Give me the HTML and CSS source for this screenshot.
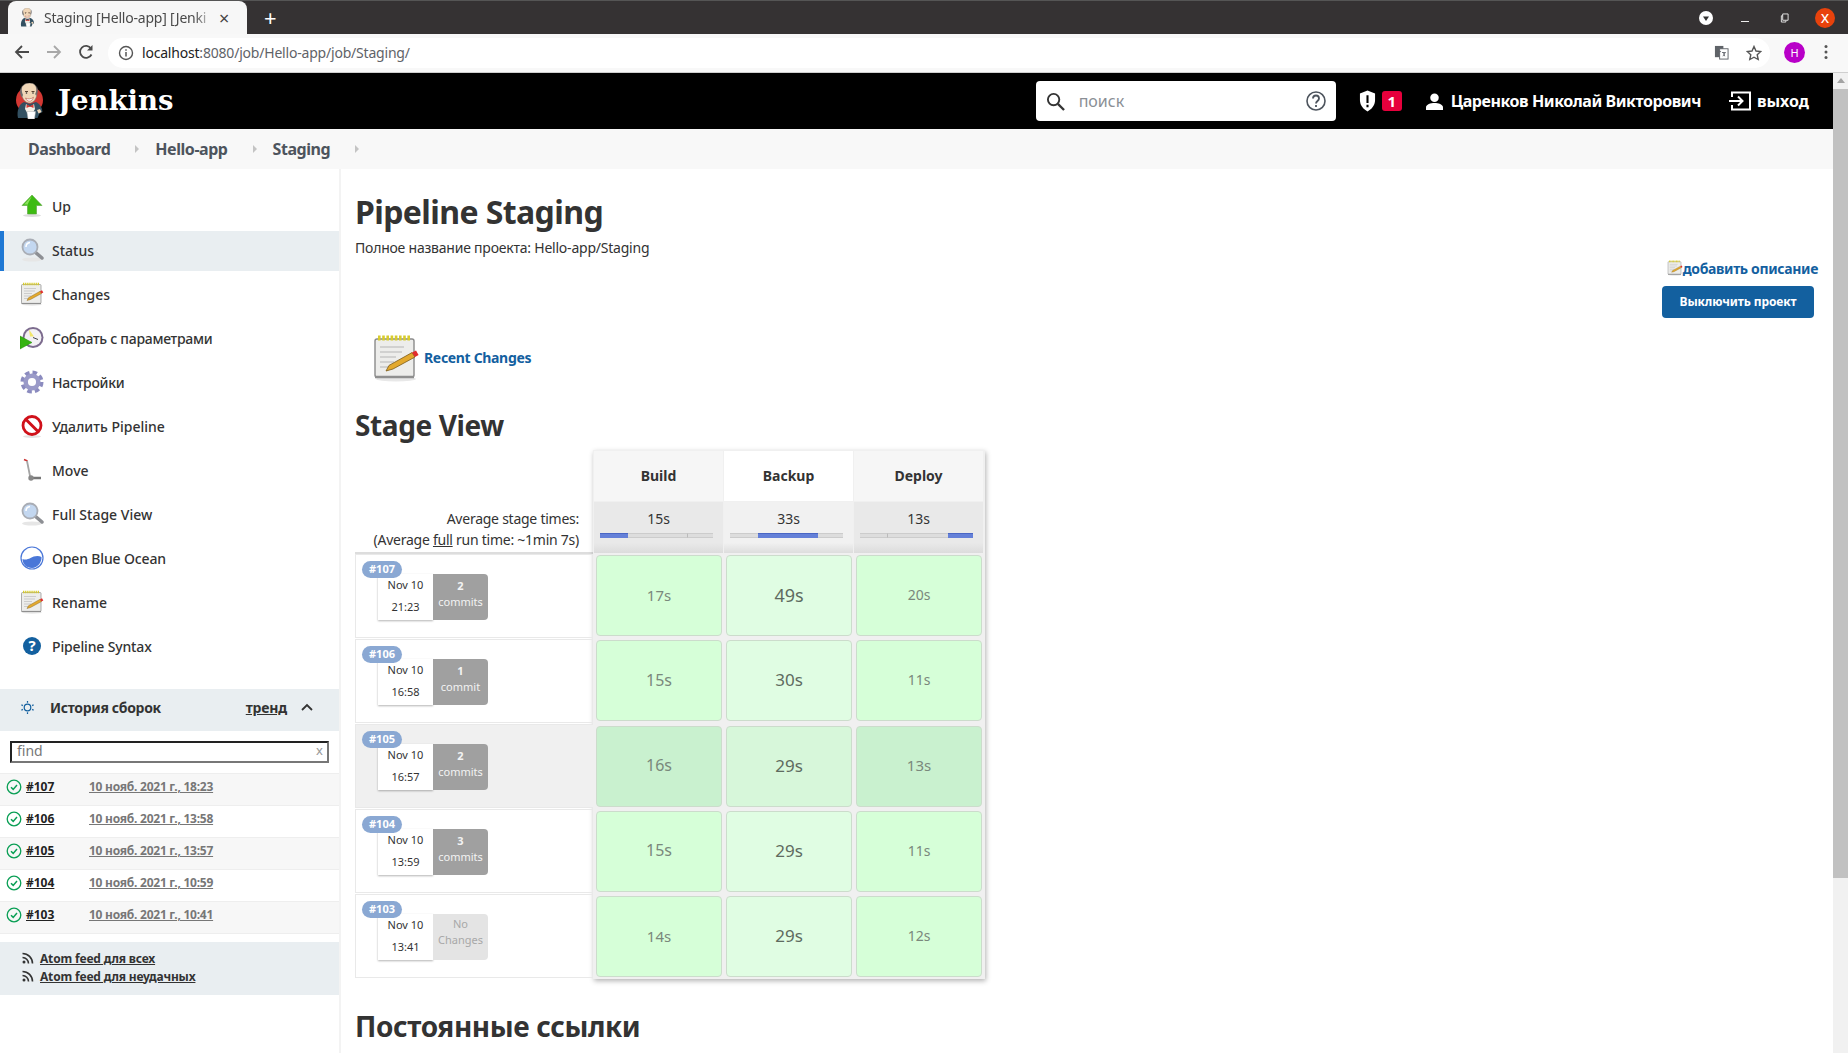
FILE: index.html
```html
<!DOCTYPE html>
<html lang="ru">
<head>
<meta charset="utf-8">
<title>Staging [Hello-app] [Jenkins]</title>
<link rel="stylesheet" href="styles.css">
</head>
<body>
<svg class="defs" aria-hidden="true">
  <symbol id="i-butler-body" viewBox="0 0 28 36">
    <path d="M2 35c-1.500-7 1-14 6-16l6 2 6-2c4 2 6 5 6.500 10l-3 1.500-2 4.500z" fill="#335061"/>
    <path d="M10 21l4 3 4-3 1 5-5 9-5-9z" fill="#f3efe6"/>
    <path d="M5 8c0-5 3.500-8 8.500-8S21 3 21 9c0 5-2 10-6.500 11C9 21 5 14 5 8z" fill="#f0d6b7" stroke="#6d6b6d" stroke-width=".5"/>
    <path d="M5 13c-1.500-4-1-7 .5-9 0 3 .5 6 1.500 8l-1 2zM21 11c1.200-2.500 1-6-.5-8 .2 3-.2 6-1.300 8l1 2z" fill="#6d6b6d"/>
    <path d="M9 8.500h3M15.500 8.500h3" stroke="#49311f" stroke-width=".9"/>
    <circle cx="10.500" cy="10" r=".8" fill="#2b2b2b"/>
    <circle cx="17" cy="10" r=".8" fill="#2b2b2b"/>
    <path d="M9.500 15c2.500 1.500 5.500 1.200 8-.8-1 3-2.500 4-4 4s-3-1-4-3.200z" fill="#fff" stroke="#a5392f" stroke-width=".5"/>
    <path d="M10.500 21.500l3.500 1.500 3.500-1.500v3.500l-3.500-1.500-3.500 1.500z" fill="#d33833"/>
    <path d="M11 28.500h8.500l-1 7.500h-6.500z" fill="#fff" stroke="#b5b5b5" stroke-width=".5"/>
    <path d="M21 27l3-1 1.500 3-3 1.500z" fill="#f0d6b7"/>
  </symbol>
  <symbol id="i-butler" viewBox="0 0 28 36">
    <circle cx="13.500" cy="17" r="13.500" fill="#d33833"/>
    <use href="#i-butler-body" width="28" height="36"/>
  </symbol>
  <symbol id="i-up" viewBox="0 0 24 24">
    <ellipse cx="12" cy="21.500" rx="9" ry="1.500" fill="#ddd"/>
    <path d="M12 1l10 10.500h-5.500V20h-9v-8.500H2z" fill="#3dbb12" stroke="#5aa33c" stroke-width=".6"/>
    <path d="M12 2l-8 8.500h4v-1z" fill="#8adf5c"/>
  </symbol>
  <symbol id="i-search" viewBox="0 0 24 24">
    <ellipse cx="12" cy="21.500" rx="10" ry="2" fill="#e6e6e6"/>
    <path d="M15 14l7 6" stroke="#8d8f94" stroke-width="3.500" stroke-linecap="round"/>
    <circle cx="10" cy="9" r="7.500" fill="#c3d7f0" stroke="#a9adb5" stroke-width="1.800"/>
    <path d="M6 9a4.500 4.500 0 0 1 4-4.500" stroke="#fff" stroke-width="1.500" fill="none"/>
  </symbol>
  <symbol id="i-notepad" viewBox="0 0 24 24">
    <ellipse cx="12" cy="22.500" rx="10" ry="1.200" fill="#e8e8e8"/>
    <rect x="1.500" y="2.500" width="19.500" height="19" rx="1" fill="#ededeb" stroke="#8b8b8b" stroke-width=".7"/>
    <path d="M3 2h16" stroke="#d8cc2c" stroke-width="2.600" stroke-dasharray="1.300 .8"/>
    <path d="M4 6.500h12M4 9h11M4 11.500h8M4 14h7M4 16.500h6" stroke="#b5b5b5" stroke-width=".6"/>
    <path d="M7 18.500l1.500-2.800L20 9.300l1.500 2.200-11 6z" fill="#e3a92e" stroke="#7c5a16" stroke-width=".4"/>
    <path d="M20 9.300l1.500 2.200 1.800-1-1.300-2.300z" fill="#e12d2d"/>
    <path d="M1.500 21.500h19.500" stroke="#8f8f8f" stroke-width="1.200"/>
  </symbol>
  <symbol id="i-clock" viewBox="0 0 24 24">
    <circle cx="13" cy="11.500" r="10.500" fill="#7c6b8e"/>
    <circle cx="13" cy="11.500" r="8.500" fill="#f3f1f4"/>
    <path d="M9 3.500l5 7h-4z" fill="#f2e66b"/>
    <path d="M13 11.500l5 2" stroke="#444" stroke-width="1"/>
    <path d="M0 10v13l12-6.500z" fill="#35b311" stroke="#288a0c" stroke-width=".5"/>
  </symbol>
  <symbol id="i-gear" viewBox="0 0 24 24">
    <circle cx="12" cy="12" r="9.500" fill="none" stroke="#8b8bbf" stroke-width="4" stroke-dasharray="4.500 3"/>
    <circle cx="12" cy="12" r="6.300" fill="none" stroke="#9a9ac8" stroke-width="4.500"/>
  </symbol>
  <symbol id="i-stop" viewBox="0 0 24 24">
    <ellipse cx="12" cy="22.500" rx="9" ry="1.500" fill="#e3e3e3"/>
    <circle cx="12" cy="11.500" r="9" fill="#fff" stroke="#d0111a" stroke-width="2.800"/>
    <path d="M5.500 5l13 13" stroke="#d0111a" stroke-width="3"/>
  </symbol>
  <symbol id="i-move" viewBox="0 0 24 24">
    <path d="M4 1.500l3.500 1.500" stroke="#c33" stroke-width="1.500"/>
    <path d="M7 3l3 15" stroke="#a5a5a5" stroke-width="1.800"/>
    <path d="M10 20h11" stroke="#777" stroke-width="2.500"/>
    <circle cx="11" cy="20" r="2.700" fill="#888"/>
  </symbol>
  <symbol id="i-ocean" viewBox="0 0 24 24">
    <circle cx="12" cy="12" r="11" fill="#fff" stroke="#4a77d8" stroke-width="1.200"/>
    <path d="M2.500 13c3 1 5 .5 8-1 3-1.500 7-3 11-1 .5 5-4 11-9.500 11S2.500 18 2.500 13z" fill="#4a77d8"/>
  </symbol>
  <symbol id="i-rss" viewBox="0 0 12 12">
    <circle cx="2" cy="10" r="1.500" fill="#333"/>
    <path d="M.5 5.500a6 6 0 0 1 6 6M.5 1.500a10 10 0 0 1 10 10" fill="none" stroke="#333" stroke-width="1.600"/>
  </symbol>
  <symbol id="i-ok" viewBox="0 0 16 16">
    <circle cx="8" cy="8" r="6.800" fill="none" stroke="#0a9f55" stroke-width="1.300"/>
    <path d="M5 8.200l2.200 2.200L11 6" fill="none" stroke="#0a9f55" stroke-width="1.500"/>
  </symbol>
</svg>

<div class="window">
  <div class="tabstrip">
    <div class="tab">
      <svg class="tab-fav"><use href="#i-butler-body"/></svg>
      <span class="tab-title">Staging [Hello-app] [Jenki</span>
      <span class="tab-close">×</span>
    </div>
    <span class="tab-new">+</span>
    <div class="win-controls">
      <span class="win-menu"><svg viewBox="0 0 14 14"><circle cx="7" cy="7" r="7" fill="#fff"/><path d="M4 5.500h6L7 10z" fill="#333"/></svg></span>
      <span class="win-min"></span>
      <span class="win-max"><svg viewBox="0 0 10 10"><path d="M3 2.500h-1.500v7h5v-1.500M3 .5h6v7H3z" fill="none" stroke="#eee" stroke-width="1"/></svg></span>
      <span class="win-close">x</span>
    </div>
  </div>
  <div class="toolbar">
    <svg class="nav-ico" viewBox="0 0 16 16"><path d="M15 8H2M8 2L2 8l6 6" fill="none" stroke="#4a4a4a" stroke-width="1.800"/></svg>
    <svg class="nav-ico nav-off" viewBox="0 0 16 16"><path d="M1 8h13M8 2l6 6-6 6" fill="none" stroke="#a8a8a8" stroke-width="1.800"/></svg>
    <svg class="nav-ico" viewBox="0 0 16 16"><path d="M13.500 10.500A6 6 0 1 1 13 4.500" fill="none" stroke="#4a4a4a" stroke-width="1.800"/><path d="M14.500 1v5.500H9z" fill="#4a4a4a"/></svg>
    <div class="omnibox">
      <svg class="omni-info" viewBox="0 0 16 16"><circle cx="8" cy="8" r="6.500" fill="none" stroke="#555" stroke-width="1.400"/><path d="M8 7v4.500M8 4.300v1.500" stroke="#555" stroke-width="1.500"/></svg>
      <span class="omni-host">localhost</span><span class="omni-path">:8080/job/Hello-app/job/Staging/</span>
      <svg class="omni-tr" viewBox="0 0 16 16"><rect x="1" y="1" width="9" height="12" fill="#5f6368"/><rect x="6" y="4" width="9" height="11" fill="#fff" stroke="#5f6368"/><path d="M3.500 7h4M8.500 8h4M10 8l1.500 4M12 8l-2.500 4" stroke="#5f6368" stroke-width=".9"/></svg>
      <svg class="omni-star" viewBox="0 0 16 16"><path d="M8 1.500l2 4.500 4.800.5-3.600 3.200 1 4.800L8 12.200l-4.200 2.300 1-4.800-3.600-3.200L6 6z" fill="none" stroke="#555" stroke-width="1.400"/></svg>
    </div>
    <span class="avatar">H</span>
    <svg class="menu-dots" viewBox="0 0 4 16"><circle cx="2" cy="2.500" r="1.500" fill="#555"/><circle cx="2" cy="8" r="1.500" fill="#555"/><circle cx="2" cy="13.500" r="1.500" fill="#555"/></svg>
  </div>

  <div class="viewport">
    <div class="page">
      <header class="jk-header">
        <svg class="jk-logo"><use href="#i-butler"/></svg>
        <span class="jk-name">Jenkins</span>
        <div class="jk-search">
          <svg class="jk-search-ico" viewBox="0 0 20 20"><circle cx="8" cy="8" r="6" fill="none" stroke="#333" stroke-width="2"/><path d="M12.500 12.500L19 19" stroke="#333" stroke-width="2.400"/></svg>
          <span class="jk-search-text">поиск</span>
          <svg class="jk-help" viewBox="0 0 20 20"><circle cx="10" cy="10" r="9" fill="none" stroke="#4d545d" stroke-width="1.600"/><path d="M7 7.500c0-4 6-4 6 0 0 2.500-3 2.500-3 5M10 14v2" fill="none" stroke="#4d545d" stroke-width="1.800"/></svg>
        </div>
        <svg class="jk-shield" viewBox="0 0 18 22"><path d="M9 0l8 3v7c0 6-4 10-8 12-4-2-8-6-8-12V3z" fill="#fff"/><path d="M9 5v8M9 15v2.500" stroke="#000" stroke-width="2.200"/></svg>
        <span class="jk-badge">1</span>
        <svg class="jk-user" viewBox="0 0 18 18"><circle cx="9" cy="5" r="4.500" fill="#fff"/><path d="M0 18v-3c0-3 5-4.500 9-4.500s9 1.500 9 4.500v3z" fill="#fff"/></svg>
        <span class="jk-username">Царенков Николай Викторович</span>
        <svg class="jk-exit" viewBox="0 0 22 20"><path d="M3 6V1.500h18v17H3V14" fill="none" stroke="#fff" stroke-width="2"/><path d="M0 10h13M9 5.500l4.500 4.500L9 14.500" fill="none" stroke="#fff" stroke-width="2"/></svg>
        <span class="jk-logout">выход</span>
      </header>

      <nav class="crumbs">
        <span class="crumb">Dashboard</span><span class="crumb-arrow"></span>
        <span class="crumb">Hello-app</span><span class="crumb-arrow"></span>
        <span class="crumb">Staging</span><span class="crumb-arrow"></span>
      </nav>

      <div class="columns">
        <aside class="side">
          <ul class="tasks">
            <li class="task"><svg class="task-ico"><use href="#i-up"/></svg>Up</li>
            <li class="task task-on"><svg class="task-ico"><use href="#i-search"/></svg>Status</li>
            <li class="task"><svg class="task-ico"><use href="#i-notepad"/></svg>Changes</li>
            <li class="task task-cy"><svg class="task-ico"><use href="#i-clock"/></svg>Собрать с параметрами</li>
            <li class="task task-cy"><svg class="task-ico"><use href="#i-gear"/></svg>Настройки</li>
            <li class="task"><svg class="task-ico"><use href="#i-stop"/></svg>Удалить Pipeline</li>
            <li class="task"><svg class="task-ico"><use href="#i-move"/></svg>Move</li>
            <li class="task"><svg class="task-ico"><use href="#i-search"/></svg>Full Stage View</li>
            <li class="task task-la"><svg class="task-ico"><use href="#i-ocean"/></svg>Open Blue Ocean</li>
            <li class="task"><svg class="task-ico"><use href="#i-notepad"/></svg>Rename</li>
            <li class="task task-la"><svg class="task-ico" viewBox="0 0 24 24"><circle cx="12" cy="12" r="9" fill="#13609f"/><text x="12" y="17" text-anchor="middle" class="help-q">?</text></svg>Pipeline Syntax</li>
          </ul>

          <div class="hist-head">
            <svg class="hist-ico" viewBox="0 0 16 16"><circle cx="8" cy="8" r="3.500" fill="none" stroke="#13609f" stroke-width="1.300"/><path d="M8 1v2M8 13v2M1.500 5l1.500 1M13 10l1.500 1M1.500 11L3 10M13 6l1.500-1" stroke="#13609f" stroke-width="1.300"/></svg>
            <span class="hist-title">История сборок</span>
            <span class="hist-trend">тренд</span>
            <svg class="hist-chev" viewBox="0 0 12 8"><path d="M1 7l5-5 5 5" fill="none" stroke="#333" stroke-width="1.800"/></svg>
          </div>
          <div class="hist-find"><div class="hist-input"><span>find</span><span class="hist-x">x</span></div></div>
          <ul class="hist-list">
            <li class="hist-row"><svg class="hist-ok"><use href="#i-ok"/></svg><span class="hist-no">#107</span><span class="hist-date">10 нояб. 2021 г., 18:23</span></li>
            <li class="hist-row"><svg class="hist-ok"><use href="#i-ok"/></svg><span class="hist-no">#106</span><span class="hist-date">10 нояб. 2021 г., 13:58</span></li>
            <li class="hist-row"><svg class="hist-ok"><use href="#i-ok"/></svg><span class="hist-no">#105</span><span class="hist-date">10 нояб. 2021 г., 13:57</span></li>
            <li class="hist-row"><svg class="hist-ok"><use href="#i-ok"/></svg><span class="hist-no">#104</span><span class="hist-date">10 нояб. 2021 г., 10:59</span></li>
            <li class="hist-row"><svg class="hist-ok"><use href="#i-ok"/></svg><span class="hist-no">#103</span><span class="hist-date">10 нояб. 2021 г., 10:41</span></li>
          </ul>
          <div class="feeds">
            <div class="feed"><svg class="feed-ico"><use href="#i-rss"/></svg><span class="feed-link">Atom feed для всех</span></div>
            <div class="feed"><svg class="feed-ico"><use href="#i-rss"/></svg><span class="feed-link">Atom feed для неудачных</span></div>
          </div>
        </aside>

        <main class="main">
          <h1 class="title">Pipeline Staging</h1>
          <p class="fullname">Полное название проекта: Hello-app/Staging</p>
          <div class="actions">
            <span class="add-desc"><svg class="add-ico"><use href="#i-notepad"/></svg>добавить описание</span>
            <button class="disable-btn">Выключить проект</button>
          </div>
          <div class="recent"><svg class="recent-ico"><use href="#i-notepad"/></svg><span class="recent-link">Recent Changes</span></div>
          <h2 class="section">Stage View</h2>

          <div class="stage">
            <div class="stage-left">
              <div class="avg-label">
                <div>Average stage times:</div>
                <div>(Average <u>full</u> run time: ~1min 7s)</div>
              </div>
              <div class="run">
                <span class="run-badge">#107</span>
                <div class="run-date"><span>Nov 10</span><span>21:23</span></div>
                <div class="run-commits"><b>2</b><span>commits</span></div>
              </div>
              <div class="run">
                <span class="run-badge">#106</span>
                <div class="run-date"><span>Nov 10</span><span>16:58</span></div>
                <div class="run-commits"><b>1</b><span>commit</span></div>
              </div>
              <div class="run run-hover">
                <span class="run-badge">#105</span>
                <div class="run-date"><span>Nov 10</span><span>16:57</span></div>
                <div class="run-commits"><b>2</b><span>commits</span></div>
              </div>
              <div class="run">
                <span class="run-badge">#104</span>
                <div class="run-date"><span>Nov 10</span><span>13:59</span></div>
                <div class="run-commits"><b>3</b><span>commits</span></div>
              </div>
              <div class="run">
                <span class="run-badge">#103</span>
                <div class="run-date"><span>Nov 10</span><span>13:41</span></div>
                <div class="run-commits run-none"><span>No</span><span>Changes</span></div>
              </div>
            </div>
            <div class="stage-right">
              <div class="st-heads">
                <div class="st-head">Build</div>
                <div class="st-head st-alt">Backup</div>
                <div class="st-head">Deploy</div>
              </div>
              <div class="st-avgs">
                <div class="st-avg"><span>15s</span><div class="bar"><i class="seg seg-on"></i><i class="seg seg-tick"></i><i class="seg"></i></div></div>
                <div class="st-avg st-alt2"><span>33s</span><div class="bar"><i class="seg"></i><i class="seg seg-on"></i><i class="seg"></i></div></div>
                <div class="st-avg"><span>13s</span><div class="bar"><i class="seg seg-tick"></i><i class="seg"></i><i class="seg seg-on"></i></div></div>
              </div>
              <div class="st-row"><div class="st-cell f15">17s</div><div class="st-cell st-cell-alt f18">49s</div><div class="st-cell f14">20s</div></div>
              <div class="st-row"><div class="st-cell f16">15s</div><div class="st-cell st-cell-alt f17">30s</div><div class="st-cell f14">11s</div></div>
              <div class="st-row st-row-hover"><div class="st-cell f16">16s</div><div class="st-cell st-cell-alt f17">29s</div><div class="st-cell f15">13s</div></div>
              <div class="st-row"><div class="st-cell f16">15s</div><div class="st-cell st-cell-alt f17">29s</div><div class="st-cell f14">11s</div></div>
              <div class="st-row"><div class="st-cell f15">14s</div><div class="st-cell st-cell-alt f17">29s</div><div class="st-cell f14">12s</div></div>
            </div>
          </div>
          <h2 class="section section-links">Постоянные ссылки</h2>
        </main>
      </div>
    </div>
    <div class="scrollbar"><span class="scroll-up"></span><div class="scroll-thumb"></div></div>
  </div>
</div>
</body>
</html>
```
FILE: styles.css
```css
* { box-sizing: border-box; }
html, body { margin: 0; padding: 0; height: 100%; overflow: hidden; }
body { font-family: "Noto Sans", "Open Sans", sans-serif; color: #333; background: #fff; font-size: 14px; }
ul { list-style: none; margin: 0; padding: 0; }
.defs { display: block; width: 0; height: 0; }
.window { display: flex; flex-direction: column; height: 1053px; overflow: hidden; }

/* browser chrome */
.tabstrip { height: 34px; background: #353233; border-top: 1px solid #555; display: flex; align-items: flex-end; padding-left: 8px; color: #fff; flex: none; }
.tab { width: 239px; height: 33px; background: #f7f7f7; border-radius: 8px 8px 0 0; display: flex; align-items: center; padding: 0 8px 0 12px; color: #4a4a4a; font-size: 14px; }
.tab-fav { width: 15px; height: 19px; flex: none; }
.tab-title { margin-left: 9px; width: 171px; white-space: nowrap; letter-spacing: -0.2px; -webkit-mask-image: linear-gradient(90deg, #000 88%, transparent); mask-image: linear-gradient(90deg, #000 88%, transparent); }
.tab-close { font-size: 18px; margin-left: 4px; line-height: 1; color: #444; }
.tab-new { font-size: 22px; line-height: 33px; margin-left: 17px; height: 33px; }
.win-controls { margin-left: auto; height: 33px; display: flex; align-items: center; padding-right: 13px; }
.win-menu { width: 14px; height: 14px; display: flex; }
.win-min { width: 8px; height: 1px; background: #eee; margin: 8px 0 0 28px; }
.win-max { width: 9px; height: 10px; margin-left: 31px; display: flex; }
.win-close { width: 20px; height: 20px; border-radius: 50%; background: #e8420c; margin-left: 26px; font-size: 16px; line-height: 18px; text-align: center; color: #fff; }
.toolbar { height: 39px; background: #f8f8f8; border-bottom: 1px solid #cfcfcf; display: flex; align-items: center; padding: 0 0 2px 14px; flex: none; }
.nav-ico { width: 16px; height: 16px; margin-right: 16px; flex: none; }
.omnibox { width: 1662px; height: 30px; margin-left: -2px; margin-top: 1px; background: #fff; border-radius: 15px; display: flex; align-items: center; padding: 0 8px 0 10px; font-size: 14px; letter-spacing: -0.2px; }
.omni-info { width: 16px; height: 16px; margin-right: 8px; }
.omni-host { color: #222; }
.omni-path { color: #5f6368; }
.omni-tr { width: 15px; height: 15px; margin-left: auto; }
.omni-star { width: 16px; height: 16px; margin-left: 17px; }
.avatar { width: 21px; height: 21px; border-radius: 50%; background: #b800c8; color: #fff; font-size: 11px; line-height: 21px; text-align: center; margin-left: 14px; flex: none; }
.menu-dots { width: 4px; height: 16px; margin-left: 19px; flex: none; }

/* page layout */
.viewport { flex: 1; display: flex; min-height: 0; }
.page { flex: 1; display: flex; flex-direction: column; min-width: 0; }
.scrollbar { width: 15px; background: #f1f1f1; display: flex; flex-direction: column; align-items: center; flex: none; }
.scroll-up { width: 0; height: 0; margin-top: 5px; border: 4px solid transparent; border-top: 0; border-bottom: 5px solid #a3a3a3; }
.scroll-thumb { width: 100%; height: 789px; margin-top: 6px; background: #c1c1c1; }

/* jenkins header */
.jk-header { height: 56px; background: #000; color: #fff; display: flex; align-items: center; flex: none; }
.jk-logo { width: 28px; height: 36px; margin-left: 16px; flex: none; }
.jk-name { font-family: "DejaVu Serif", serif; font-weight: 700; font-size: 27.5px; margin-left: 14px; padding-bottom: 2px; }
.jk-search { width: 300px; height: 40px; margin-left: auto; background: #fff; border-radius: 4px; display: flex; align-items: center; padding: 0 10px; }
.jk-search-ico { width: 19px; height: 19px; }
.jk-search-text { color: #8a8f95; font-size: 16px; margin-left: 14px; }
.jk-help { width: 20px; height: 20px; margin-left: auto; }
.jk-shield { width: 17px; height: 22px; margin-left: 23px; }
.jk-badge { width: 20px; height: 20px; background: #e6003c; border-radius: 3px; margin-left: 6px; font-weight: 700; font-size: 15px; line-height: 20px; text-align: center; }
.jk-user { width: 17px; height: 17px; margin-left: 24px; }
.jk-username { font-size: 16px; font-weight: 700; margin-left: 8px; white-space: nowrap; letter-spacing: -0.43px; }
.jk-exit { width: 22px; height: 20px; margin-left: 28px; }
.jk-logout { font-size: 16px; font-weight: 700; margin: 0 24px 0 6px; }

/* breadcrumbs */
.crumbs { height: 40px; background: #f8f8f8; display: flex; align-items: center; padding-left: 28px; flex: none; }
.crumb { font-size: 16px; font-weight: 700; color: #4d545d; white-space: nowrap; letter-spacing: -0.45px; }
.crumb-arrow { width: 0; height: 0; border: 4px solid transparent; border-left: 4px solid #c4c4c4; border-right: 0; margin: 0 16px 0 25px; }

/* columns */
.columns { flex: 1; display: flex; min-height: 0; }
.side { width: 341px; flex: none; border-right: 2px solid #f3f3f3; padding-top: 18px; }
.task { height: 40px; margin-bottom: 4px; display: flex; align-items: center; padding: 0 0 2px 20px; font-size: 14px; font-weight: 500; color: #333; white-space: nowrap; }
.task-cy { letter-spacing: -0.28px; }
.task-la { letter-spacing: -0.15px; }
.task-on { background: #e9eef1; box-shadow: inset 4px 0 0 #1f78d4; }
.task-ico { width: 24px; height: 24px; margin-right: 8px; flex: none; }
.help-q { font-size: 15px; font-weight: 700; fill: #fff; font-family: "Noto Sans", sans-serif; }

.hist-head { height: 42px; margin-top: 22px; background: #e9eef1; display: flex; align-items: center; padding: 0 0 6px 20px; font-weight: 700; font-size: 14px; }
.hist-ico { width: 15px; height: 15px; }
.hist-title { margin-left: 15px; letter-spacing: -0.33px; }
.hist-trend { margin-left: auto; text-decoration: underline; letter-spacing: -0.2px; }
.hist-chev { width: 12px; height: 8px; margin: 0 26px 0 14px; }
.hist-find { height: 42px; padding: 10px; }
.hist-input { height: 22px; width: 319px; border: 2px solid; border-color: #222 #777 #777 #222; display: flex; justify-content: space-between; align-items: center; padding: 0 4px 4px 5px; color: #777; font-size: 14px; }
.hist-x { font-size: 13px; color: #999; }
.hist-list { border-top: 1px solid #eee; }
.hist-row { height: 32px; border-bottom: 1px solid #eee; display: flex; align-items: center; padding: 0 0 6px 6px; font-size: 12px; font-weight: 700; }
.hist-row:nth-child(odd) { background: #f7f7f7; }
.hist-ok { width: 16px; height: 16px; flex: none; }
.hist-no { margin-left: 4px; width: 63px; text-decoration: underline; color: #222; }
.hist-date { color: #777; text-decoration: underline; white-space: nowrap; letter-spacing: -0.25px; }
.feeds { margin-top: 8px; height: 53px; background: #e9eef1; padding: 7px 0 0 22px; }
.feed { height: 18px; display: flex; align-items: center; font-size: 12px; font-weight: 700; color: #333; }
.feed-ico { width: 12px; height: 12px; margin-right: 6px; flex: none; }
.feed-link { text-decoration: underline; white-space: nowrap; letter-spacing: -0.18px; }

/* main */
.main { flex: 1; min-width: 0; padding: 23px 15px 0 14px; display: flex; flex-direction: column; }
.title { margin: 0; font-size: 32px; line-height: 40px; font-weight: 700; color: #333; letter-spacing: -0.6px; }
.fullname { margin: 6px 0 0; line-height: 20px; font-size: 14px; letter-spacing: -0.22px; }
.actions { display: flex; flex-direction: column; align-items: flex-end; margin-top: 0; }
.add-desc { display: flex; align-items: center; height: 20px; color: #13609f; font-weight: 700; font-size: 14px; letter-spacing: -0.35px; }
.add-ico { width: 16px; height: 16px; }
.disable-btn { width: 152px; height: 32px; margin: 8px 4px 0 0; border: 0; border-radius: 4px; background: #13609f; color: #fff; font-family: inherit; font-weight: 700; font-size: 12px; padding: 0 0 2px; letter-spacing: -0.1px; }
.recent { display: flex; align-items: center; margin: 16px 0 0 17px; height: 48px; }
.recent-ico { width: 48px; height: 48px; margin-right: 4px; }
.recent-link { color: #13609f; font-weight: 700; font-size: 14px; letter-spacing: -0.33px; padding-bottom: 2px; }
.section { margin: 25px 0 0; font-size: 28px; line-height: 36px; font-weight: 700; color: #333; letter-spacing: -0.4px; }
.section-links { margin-top: 29px; }

/* stage view */
.stage { display: flex; margin-top: 7px; }
.stage-left { width: 238px; flex: none; }
.avg-label { height: 104px; display: flex; flex-direction: column; justify-content: flex-end; align-items: flex-end; padding: 0 14px 2px 0; line-height: 21px; font-size: 14px; letter-spacing: -0.25px; border-bottom: 2px solid #ddd; }
.run { position: relative; height: 84px; margin-bottom: 1px; border: 1px solid #e9e9e9; border-right: 0; display: flex; padding: 19px 0 0 22px; }
.run-hover { background: #f0f0f0; }
.run-badge { position: absolute; left: 6px; top: 6px; width: 40px; height: 17px; border-radius: 9px; background: #8aa8d3; color: #fff; font-size: 11px; font-weight: 700; line-height: 16px; text-align: center; }
.run-date { width: 55px; height: 46px; background: #fff; box-shadow: 0 1px 2px rgba(0,0,0,.3); display: flex; flex-direction: column; align-items: center; font-size: 11px; line-height: 22px; color: #333; }
.run-commits { width: 55px; height: 46px; background: #a0a0a0; border-radius: 0 4px 4px 0; color: #f3f3f3; display: flex; flex-direction: column; align-items: center; font-size: 11px; line-height: 16px; padding-top: 4px; }
.run-none { background: #e4e4e4; color: #a8a8a8; padding-top: 2px; }

.stage-right { width: 392px; flex: none; background: #f0f0f0; padding: 1px 1px 0; box-shadow: 1px 2px 5px rgba(0,0,0,.3); }
.st-heads, .st-avgs, .st-row { display: grid; grid-template-columns: repeat(3, 130px); }
.st-head { height: 50px; margin-right: 1px; padding-bottom: 2px; background: #f6f6f6; display: flex; align-items: center; justify-content: center; font-weight: 700; font-size: 14px; color: #333; }
.st-alt { background: #fff; }
.st-avgs { margin-top: 1px; }
.st-avg { height: 51px; margin-right: 1px; background: linear-gradient(#e9e9e9 80%, #dcdcdc); display: flex; flex-direction: column; align-items: center; padding: 7px 6px 0; font-size: 14px; line-height: 20px; color: #333; }
.st-alt2 { background: linear-gradient(#f1f1f1 80%, #dddddd); }
.bar { width: 113px; height: 5px; margin-top: 4px; align-self: flex-start; background: #ddd; display: grid; grid-template-columns: 25% 53% 22%; }
.seg { display: block; height: 5px; border: 1px solid #ccc; border-width: 1px 0; }
.seg-tick { border-right: 1px solid #bbb; }
.seg-on { background: #6480d8; border-color: #4a66c4 transparent transparent; }
.st-row { height: 85.25px; }
.st-cell { margin: 2px 2px 2.25px; padding-bottom: 2px; background: #d6ffd8; border: 1px solid #ccdccc; border-radius: 4px; display: flex; align-items: center; justify-content: center; color: #7a887c; }
.st-cell-alt { background: #e0fde3; color: #5e6b60; }
.st-row-hover .st-cell { background: #c9f1cf; }
.st-row-hover .st-cell-alt { background: #d7f7da; }
.f14 { font-size: 14px; }
.f15 { font-size: 15px; }
.f16 { font-size: 16px; }
.f17 { font-size: 17px; }
.f18 { font-size: 18px; }
```
